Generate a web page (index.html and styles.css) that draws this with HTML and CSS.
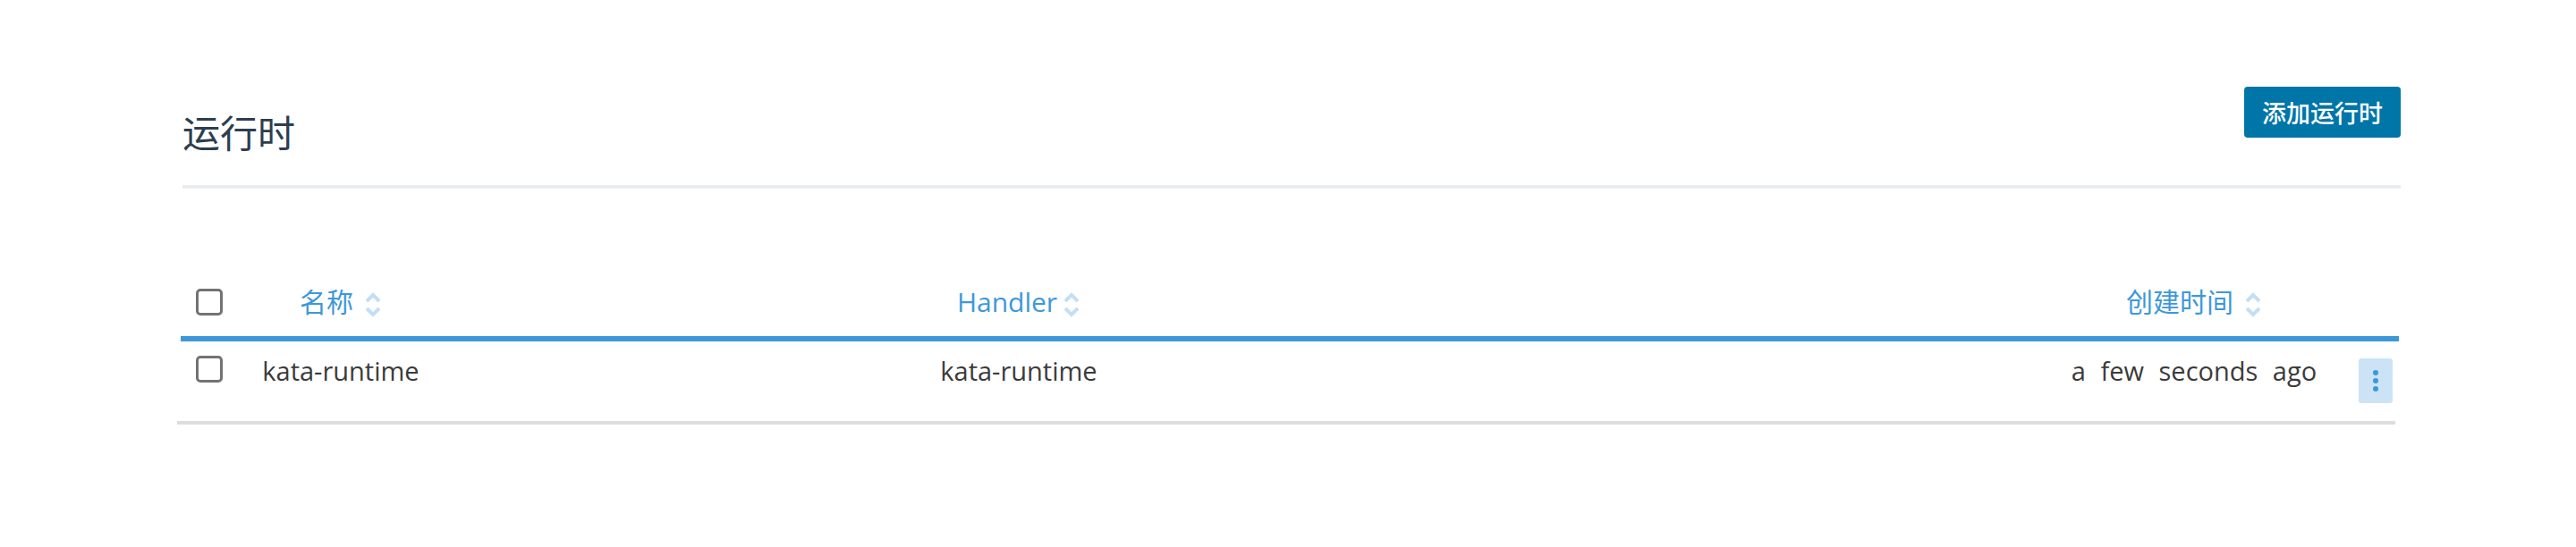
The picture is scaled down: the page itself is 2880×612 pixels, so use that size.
FILE: index.html
```html
<!DOCTYPE html>
<html lang="zh">
<head>
<meta charset="utf-8">
<title>运行时</title>
<link rel="stylesheet" href="styles.css">
</head>
<body>
<div class="page">
  <header class="page-header">
    <h1 class="title">运行时</h1>
    <button class="btn-primary">添加运行时</button>
  </header>

  <div class="table">
    <div class="thead grid">
      <div class="cell cell-check"><span class="checkbox"></span></div>
      <div class="cell th">名称&nbsp;<svg class="sort" viewBox="0 0 20 30"><path d="M3 11 L10 4 L17 11 M3 19 L10 26 L17 19" /></svg></div>
      <div class="cell th">Handler<svg class="sort sort-tight" viewBox="0 0 20 30"><path d="M3 11 L10 4 L17 11 M3 19 L10 26 L17 19" /></svg></div>
      <div class="cell"></div>
      <div class="cell th">创建时间&nbsp;<svg class="sort" viewBox="0 0 20 30"><path d="M3 11 L10 4 L17 11 M3 19 L10 26 L17 19" /></svg></div>
      <div class="cell"></div>
    </div>
    <div class="row grid">
      <div class="cell cell-check"><span class="checkbox"></span></div>
      <div class="cell td">kata-runtime</div>
      <div class="cell td">kata-runtime</div>
      <div class="cell"></div>
      <div class="cell td td-time">a few seconds ago</div>
      <div class="cell cell-action">
        <button class="btn-actions" aria-label="actions"><span class="dot"></span><span class="dot"></span><span class="dot"></span></button>
      </div>
    </div>
  </div>
</div>
</body>
</html>
```

FILE: styles.css
```css
* { box-sizing: border-box; }

html, body {
  margin: 0;
  padding: 0;
  background: #ffffff;
}

body {
  font-family: "Open Sans", "Noto Sans CJK SC", sans-serif;
  color: #3b3b3b;
}

.page {
  padding: 0 196px 0 204px;
}

.page-header {
  display: flex;
  justify-content: space-between;
  align-items: flex-start;
  padding-top: 97px;
  height: 211px;
  border-bottom: 4px solid #eaedf0;
}

.title {
  margin: 25px 0 0 0;
  font-family: "Noto Sans CJK SC", sans-serif;
  font-weight: 400;
  font-size: 42px;
  line-height: 50px;
  color: #2c3e50;
}

.btn-primary {
  height: 57px;
  padding: 0 20px;
  border: none;
  border-radius: 4px;
  background: #0075a8;
  color: #ffffff;
  font-family: "Noto Sans CJK SC", sans-serif;
  font-size: 27px;
  font-weight: 500;
  line-height: 57px;
}

.table {
  margin-top: 89px;
  margin-left: -2px;
  margin-right: 2px;
}

.grid {
  display: grid;
  grid-template-columns: 64px 230px 1286px 494px 354px 52px;
}

.thead {
  height: 82px;
  border-bottom: 6px solid #3d98d9;
  align-items: center;
}

.cell {
  display: flex;
  justify-content: center;
}

.checkbox {
  display: block;
  width: 30px;
  height: 30px;
  border: 3px solid #737373;
  border-radius: 5px;
}

.th {
  align-items: center;
  font-size: 30px;
  line-height: 40px;
  color: #3d98d9;
}

.sort {
  width: 20px;
  height: 30px;
  margin-left: 4px;
  margin-top: 6px;
  fill: none;
  stroke: #c3def5;
  stroke-width: 4;
}

.sort-tight {
  margin-left: 6px;
}

.row {
  height: 93px;
  padding-top: 16px;
  border-bottom: 4px solid #dcdddf;
  margin-left: -4px;
  margin-right: 4px;
  padding-left: 4px;
  align-items: start;
}

.td {
  font-size: 29px;
  line-height: 34px;
  color: #3b3b3b;
}

.td-time {
  word-spacing: 9px;
}

.cell-action {
  justify-content: flex-start;
  padding-left: 7px;
}

.btn-actions {
  margin-top: 3px;
  width: 38px;
  height: 50px;
  padding: 0;
  border: none;
  border-radius: 3px;
  background: #cce3f6;
  display: flex;
  flex-direction: column;
  align-items: center;
  justify-content: center;
  gap: 3px;
}

.dot {
  display: block;
  width: 6px;
  height: 6px;
  border-radius: 50%;
  background: #3d98d9;
}
```
